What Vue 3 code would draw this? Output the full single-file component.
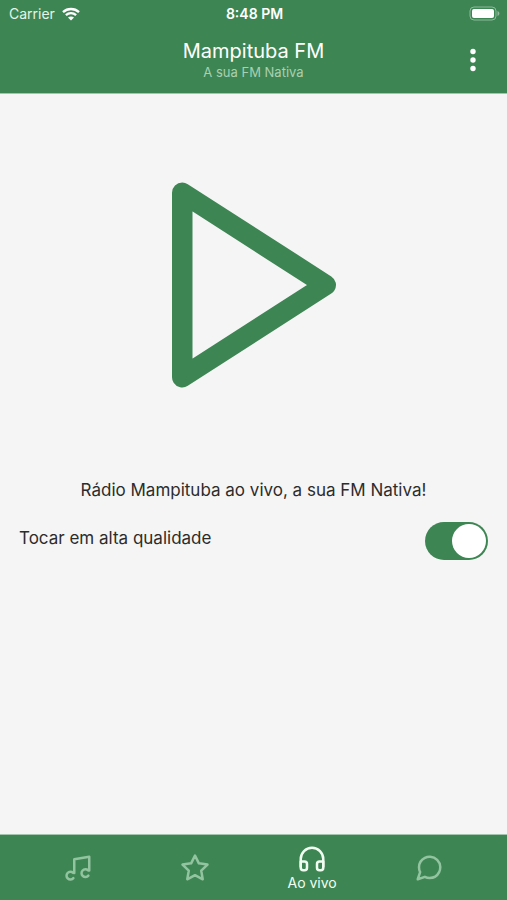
<script setup>
import { ref } from 'vue'

const playing = ref(false)
const highQuality = ref(true)
const active = ref('live')
const tabs = [
  { id: 'music', label: 'Músicas' },
  { id: 'favorites', label: 'Favoritos' },
  { id: 'live', label: 'Ao vivo' },
  { id: 'chat', label: 'Contato' },
]
</script>

<template>
  <div class="app">
    <header class="top">
      <div class="status">
        <div class="carrier">
          <span>Carrier</span>
          <svg class="wifi" viewBox="0 0 18 14" aria-hidden="true">
            <path d="M1 5.1C5.5.9 12.500.9 17 5.1" />
            <path d="M3.900 8.100c2.900-2.700 7.300-2.700 10.200 0" />
            <path class="dot" d="M9 13.600L6 10.500c1.700-1.500 4.300-1.500 6 0z" />
          </svg>
        </div>
        <span class="time">8:48 PM</span>
        <svg class="battery" viewBox="0 0 31 15" aria-hidden="true">
          <rect class="shell" x="1" y="1" width="26" height="13" rx="4" />
          <rect class="charge" x="3" y="3" width="22" height="9" rx="2" />
          <path class="cap" d="M28.500 5c2.500.8 2.500 4.200 0 5z" />
        </svg>
      </div>
      <div class="titlebar">
        <div class="titles">
          <h1>Mampituba FM</h1>
          <p>A sua FM Nativa</p>
        </div>
        <button class="more" type="button" aria-label="Mais opções">
          <svg viewBox="0 0 6 24" aria-hidden="true">
            <circle cx="3" cy="3.500" r="2.700" />
            <circle cx="3" cy="12" r="2.700" />
            <circle cx="3" cy="20.500" r="2.700" />
          </svg>
        </button>
      </div>
    </header>

    <main>
      <button class="play" type="button" aria-label="Tocar" :aria-pressed="playing" @click="playing = !playing">
        <svg viewBox="0 0 24 24" aria-hidden="true"><polygon points="5 3 19 12 5 21" /></svg>
      </button>
      <p class="message">Rádio Mampituba ao vivo, a sua FM Nativa!</p>
      <div class="setting">
        <label for="quality">Tocar em alta qualidade</label>
        <input id="quality" v-model="highQuality" class="switch" type="checkbox" role="switch" />
      </div>
    </main>

    <nav>
      <button
        v-for="tab in tabs"
        :key="tab.id"
        type="button"
        :class="{ active: active === tab.id }"
        :aria-label="tab.label"
        @click="active = tab.id"
      >
        <svg viewBox="0 0 24 24" aria-hidden="true">
          <template v-if="tab.id === 'music'">
            <path d="M9 16V5l12-2v11" />
            <path d="M8.100 15.900A3.100 3.100 0 1 0 8.300 20.100" />
            <path d="M20.100 13.900A3.100 3.100 0 1 0 20.300 18.100" />
          </template>
          <polygon
            v-else-if="tab.id === 'favorites'"
            points="12 2 15.090 8.260 22 9.270 17 14.140 18.180 21.020 12 17.770 5.820 21.020 7 14.140 2 9.270 8.910 8.260"
          />
          <template v-else-if="tab.id === 'live'">
            <path d="M3 18v-6a9 9 0 0 1 18 0v6" />
            <path d="M21 19a2 2 0 0 1-2 2h-1a2 2 0 0 1-2-2v-3a2 2 0 0 1 2-2h3zM3 19a2 2 0 0 0 2 2h1a2 2 0 0 0 2-2v-3a2 2 0 0 0-2-2H3z" />
          </template>
          <path
            v-else
            d="M21 11.500a8.380 8.380 0 0 1-.9 3.800 8.500 8.500 0 0 1-7.600 4.700 8.380 8.380 0 0 1-3.800-.9L3 21l1.900-5.700a8.380 8.380 0 0 1-.9-3.800 8.500 8.500 0 0 1 4.700-7.600 8.380 8.380 0 0 1 3.800-.9h.5a8.480 8.480 0 0 1 8 8v.5z"
          />
        </svg>
        <span v-if="active === tab.id">{{ tab.label }}</span>
      </button>
    </nav>
  </div>
</template>

<style>
body {
  margin: 0;
}
</style>

<style scoped>
.app {
  --green: #3e8554;
  min-height: 100vh;
  display: flex;
  flex-direction: column;
  background: #f5f5f5;
  color: #2c2c2c;
  font-family: Inter, "Liberation Sans", sans-serif;
}
button {
  border: 0;
  padding: 0;
  background: none;
  color: inherit;
  font: inherit;
  cursor: pointer;
}
svg {
  display: block;
}
h1,
p {
  margin: 0;
}
.top {
  background: var(--green);
  color: #fff;
  padding-bottom: 12px;
  border-bottom: 1px solid #a3c4ad;
}
.status {
  display: grid;
  grid-template-columns: 1fr auto 1fr;
  align-items: center;
  height: 27px;
  padding: 0 7px 0 9px;
  font-size: 14px;
}
.carrier {
  display: flex;
  align-items: center;
  gap: 7px;
  color: #e3f5e6;
}
.wifi {
  width: 18px;
  height: 14px;
  fill: none;
  stroke: #fff;
  stroke-width: 2.400;
}
.wifi .dot {
  fill: #fff;
  stroke: none;
}
.time {
  font-size: 14px;
  font-weight: 600;
}
.battery {
  width: 31px;
  height: 15px;
  justify-self: end;
}
.shell {
  fill: none;
  stroke: #8fb99b;
}
.charge {
  fill: #fff;
}
.cap {
  fill: #8fb99b;
}
.titlebar {
  display: grid;
  grid-template-columns: 1fr auto 1fr;
  align-items: center;
  padding: 12px 27px 0;
}
.titles {
  grid-column: 2;
  text-align: center;
}
h1 {
  font-size: 20px;
  line-height: 24px;
  font-weight: 400;
}
.titles p {
  font-size: 13px;
  line-height: 18px;
  color: #a9d0b2;
}
.more {
  justify-self: end;
  padding: 4px;
}
.more svg {
  width: 6px;
  height: 24px;
  fill: #fff;
}
main {
  flex: 1;
  padding: 68px 19px 24px;
}
.play {
  display: block;
  width: 246px;
  margin: 0 auto;
}
.play svg {
  width: 100%;
  fill: none;
  stroke: var(--green);
  stroke-width: 2;
  stroke-linejoin: round;
}
.message {
  margin-top: 70px;
  text-align: center;
  font-size: 17px;
  line-height: 24px;
}
.setting {
  display: flex;
  justify-content: space-between;
  align-items: flex-start;
  margin-top: 20px;
  font-size: 17px;
  line-height: 32px;
}
.switch {
  appearance: none;
  display: flex;
  align-items: center;
  width: 63px;
  height: 38px;
  margin: 0;
  padding: 2px;
  box-sizing: border-box;
  border-radius: 19px;
  background: #ccc;
  cursor: pointer;
}
.switch::before {
  content: "";
  width: 34px;
  height: 34px;
  border-radius: 50%;
  background: #fff;
}
.switch:checked {
  justify-content: flex-end;
  background: var(--green);
}
nav {
  display: grid;
  grid-template-columns: repeat(4, 1fr);
  height: 65px;
  padding: 0 19px;
  background: var(--green);
  border-top: 1px solid #a3c4ad;
  color: #92c49f;
}
nav button {
  display: flex;
  flex-direction: column;
  align-items: center;
  justify-content: center;
}
nav svg {
  width: 30px;
  height: 30px;
  fill: none;
  stroke: currentColor;
  stroke-width: 2;
  stroke-linecap: round;
  stroke-linejoin: round;
}
nav .active {
  color: #f1fff2;
}
nav span {
  font-size: 14px;
  line-height: 17px;
}
</style>
